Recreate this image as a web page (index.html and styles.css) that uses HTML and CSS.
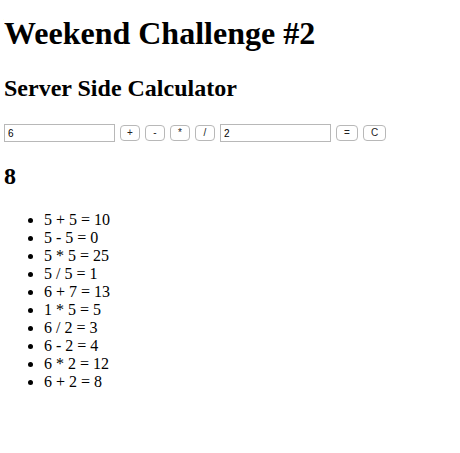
FILE: index.html
```html
<!DOCTYPE html>
<html>
<head>
<meta charset="utf-8">
<link rel="stylesheet" href="styles.css">
</head>
<body>
<h1 class="title">Weekend Challenge #2</h1>
<h2 class="subtitle">Server Side Calculator</h2>
<div class="calc">
  <input class="num" type="text" value="6">
  <button class="op">+</button>
  <button class="op">-</button>
  <button class="op">*</button>
  <button class="op">/</button>
  <input class="num" type="text" value="2">
  <button class="op op-eq">=</button>
  <button class="op op-clear">C</button>
</div>
<h2 class="result">8</h2>
<ul class="history">
  <li>5 + 5 = 10</li>
  <li>5 - 5 = 0</li>
  <li>5 * 5 = 25</li>
  <li>5 / 5 = 1</li>
  <li>6 + 7 = 13</li>
  <li>1 * 5 = 5</li>
  <li>6 / 2 = 3</li>
  <li>6 - 2 = 4</li>
  <li>6 * 2 = 12</li>
  <li>6 + 2 = 8</li>
</ul>
</body>
</html>
```

FILE: styles.css
```css
body {
  margin: 4px;
  font-family: "Liberation Serif", serif;
  color: #000;
  background: #fff;
}
.title {
  font-size: 32px;
  font-weight: bold;
  margin: 11px 0 23px;
}
.subtitle {
  font-size: 24px;
  margin: 0 0 22px;
}
.calc {
  display: flex;
  align-items: flex-end;
  gap: 5px;
}
.num {
  width: 111px;
  height: 18px;
  box-sizing: border-box;
  border: 1px solid #b8b8b8;
  padding: 0 3px;
  font-family: "Liberation Sans", sans-serif;
  font-size: 10px;
  margin: 0;
}
.op {
  box-sizing: border-box;
  width: 20px;
  height: 16px;
  padding: 0;
  border: 1px solid #b8b8b8;
  border-radius: 4px;
  background: #fff;
  color: #222;
  font-family: "Liberation Sans", sans-serif;
  font-size: 10px;
  line-height: 14px;
  text-align: center;
  margin: 0 0 1px;
}
.op-eq {
  width: 22px;
}
.op-clear {
  width: 23px;
}
.result {
  font-size: 24px;
  margin: 21px 0 21px;
}
.history {
  margin: 0;
  padding-left: 40px;
  font-size: 16px;
}
.history li {
  line-height: 18px;
}
```
